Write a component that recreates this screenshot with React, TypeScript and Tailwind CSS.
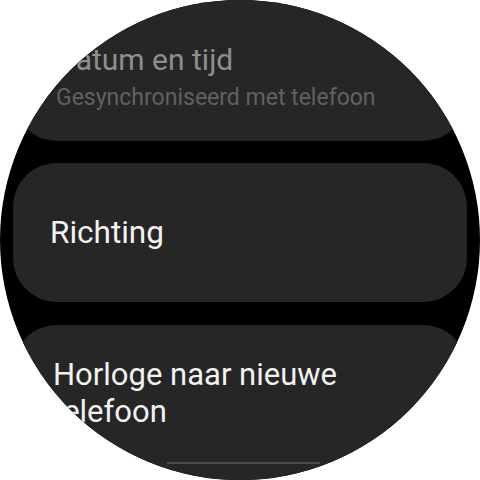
import React from 'react';

const font = { fontFamily: 'Roboto, "Noto Sans", sans-serif' };

function App() {
  return (
    <div className="w-[480px] h-[480px] bg-white" style={font}>
      <div className="w-full h-full rounded-full bg-black overflow-hidden flex flex-col">
        {/* Datum en tijd (fading out at the top) */}
        <div className="mx-[13px] -mt-[20px] h-[161px] shrink-0 rounded-[44px] bg-[#262626] flex flex-col justify-end pl-[43px] pb-[30px]">
          <div className="text-[30px] leading-[35px] text-[#8e8e8e]">Datum en tijd</div>
          <div className="mt-[7px] text-[23px] leading-[27px] text-[#616161]">
            Gesynchroniseerd met telefoon
          </div>
        </div>

        {/* Richting */}
        <div className="mx-[13px] mt-[22px] h-[139px] shrink-0 rounded-[44px] bg-[#262626] flex items-center pl-[37px]">
          <div className="text-[31.5px] leading-[36px] text-[#f2f2f2]">Richting</div>
        </div>

        {/* Horloge naar nieuwe telefoon */}
        <div className="mx-[13px] mt-[23px] h-[200px] shrink-0 rounded-[44px] bg-[#262626] flex flex-col pt-[31px] pl-[40px]">
          <div className="text-[31px] leading-[37px] text-[#f2f2f2]">
            Horloge naar nieuwe
            <br />
            telefoon
          </div>
          <div className="mt-[32px] ml-[114px] h-[2px] w-[153px] bg-[#4a4a4a]" />
        </div>
      </div>
    </div>
  );
}

export default App;
